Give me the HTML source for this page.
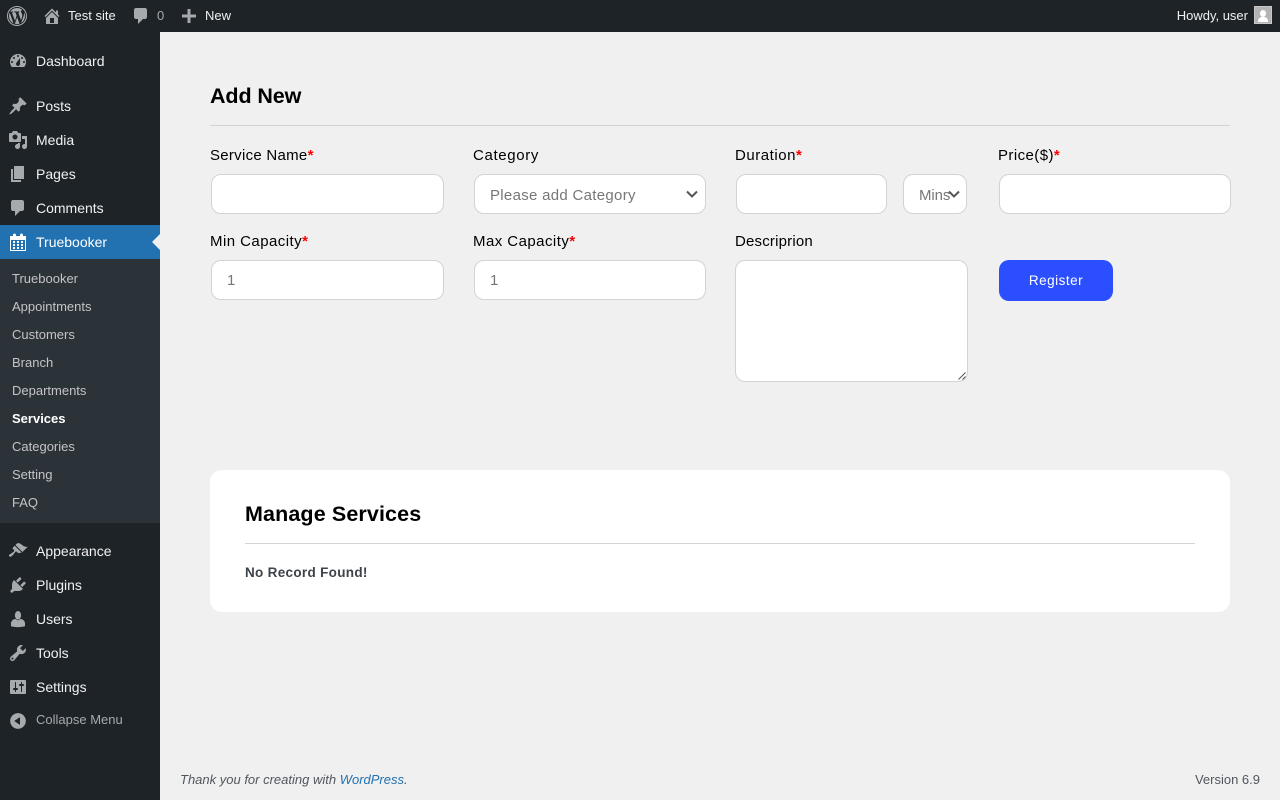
<!DOCTYPE html>
<html lang="en">
<head>
<meta charset="utf-8">
<title>Services</title>
<style>
html,body{margin:0;padding:0;width:1280px;height:800px;overflow:hidden;background:#f0f0f1;font-family:"Liberation Sans",Arial,sans-serif}
*{box-sizing:border-box}
.a{position:absolute;white-space:nowrap}
#bar{position:absolute;left:0;top:0;width:1280px;height:32px;background:#1d2327}
#side{position:absolute;left:0;top:32px;width:160px;height:768px;background:#1d2327}
#sub{position:absolute;left:0;top:259px;width:160px;height:264px;background:#2c3338}
#act{position:absolute;left:0;top:225px;width:160px;height:34px;background:#2271b1}
#arrow{position:absolute;left:152px;top:234px;width:0;height:0;border:8px solid transparent;border-left:0;border-right-color:#f0f0f1}
svg{position:absolute;fill:#a7aaad}
.m{font-size:14px;line-height:18px;color:#f0f0f1;left:36px}
.s{font-size:13px;line-height:18px;color:#c3c4c7;left:12px}
.t{font-size:13px;line-height:18px;color:#f0f0f1}
.l{font-size:15px;line-height:20px;color:#000;letter-spacing:.28px}
.l b{color:#f00;font-weight:700;letter-spacing:0}
.i{position:absolute;background:#fff;border:1px solid #d3d3d3;border-radius:10px}
.p{font-size:15px;line-height:20px;color:#777;letter-spacing:.3px}
</style>
</head>
<body>
<div id="bar"></div>
<div id="side"></div>
<div id="act"></div>
<div id="sub"></div>
<div id="arrow"></div>

<svg style="left:7px;top:6px" width="20" height="20" viewBox="0 0 20 20"><path d="M20 10c0-5.520-4.480-10-10-10S0 4.480 0 10s4.480 10 10 10 10-4.480 10-10zM10 1.010c4.960 0 8.990 4.030 8.990 8.990s-4.030 8.990-8.990 8.990S1.010 14.960 1.010 10 5.040 1.010 10 1.010zM8.010 14.820L4.960 6.610c.49-.03 1.050-.08 1.050-.08.43-.05.38-1.010-.06-.99 0 0-1.290.1-2.130.1-.15 0-.33 0-.52-.01 1.440-2.170 3.900-3.600 6.700-3.600 2.090 0 3.990.79 5.410 2.090-.6-.09-1.450.35-1.450 1.420 0 .66.38 1.220.79 1.880.31.54.5 1.220.5 2.210 0 1.340-1.270 4.480-1.270 4.480l-2.710-7.500c.48-.03.75-.16.75-.16.43-.05.38-1.100-.05-1.080 0 0-1.300.11-2.140.11-.78 0-2.110-.11-2.110-.11-.43-.02-.48 1.060-.05 1.080l.84.08 1.120 3.040zm6.020 2.150L16.640 10s.67-1.690.39-3.810c.63 1.140.94 2.420.94 3.810 0 2.960-1.560 5.580-3.940 6.970zM2.680 6.770L6.500 17.250c-2.670-1.300-4.470-4.080-4.470-7.250 0-1.160.2-2.230.65-3.230zm7.450 4.530l2.290 6.250c.02.05.05.1.08.14-.77.26-1.600.42-2.470.42-.74 0-1.460-.11-2.140-.31z"/></svg>
<svg style="left:42px;top:6px" width="20" height="20" viewBox="0 0 20 20"><path d="M16 8.500l1.530 1.530-1.060 1.060L10 4.620l-6.470 6.470-1.060-1.060L10 2.500l4 4v-2h2v4zm-6-2.460l6 5.990V18H4v-5.970zM12 17v-5H8v5h4z"/></svg>
<div class="a t" style="left:68px;top:7px">Test site</div>
<svg style="left:131px;top:6px" width="20" height="20" viewBox="0 0 20 20"><path d="M5 2h9c1.100 0 2 .9 2 2v7c0 1.100-.9 2-2 2h-2l-5 5v-5H5c-1.100 0-2-.9-2-2V4c0-1.100.9-2 2-2z"/></svg>
<div class="a t" style="left:157px;top:7px;color:#a7aaad">0</div>
<svg style="left:179px;top:6px" width="20" height="20" viewBox="0 0 20 20"><path d="M17 8.500v3h-5.500V17h-3v-5.500H3v-3h5.500V3h3v5.500z"/></svg>
<div class="a t" style="left:205px;top:7px">New</div>
<div class="a t" style="right:32px;top:7px">Howdy, user</div>
<div class="a" style="left:1254px;top:6px;width:18px;height:18px;background:#b4b4b4;border:1px solid #c8c8c8;overflow:hidden">
  <div class="a" style="left:5px;top:3px;width:6px;height:7px;border-radius:50%;background:#fff"></div>
  <div class="a" style="left:3px;top:10px;width:10px;height:5px;border-radius:4px 4px 0 0;background:#fff"></div>
</div>

<svg style="left:8px;top:51px" width="20" height="20" viewBox="0 0 20 20"><path fill-rule="evenodd" d="M3.760 16h12.480c1.100-1.370 1.760-3.110 1.760-5 0-4.420-3.580-8-8-8s-8 3.580-8 8c0 1.890.66 3.630 1.760 5zM10 4c.55 0 1 .45 1 1s-.45 1-1 1-1-.45-1-1 .45-1 1-1zM6 6c.55 0 1 .45 1 1s-.45 1-1 1-1-.45-1-1 .45-1 1-1zm8 0c.55 0 1 .45 1 1s-.45 1-1 1-1-.45-1-1 .45-1 1-1zm-5.370 5.550L12 7v6c0 1.100-.9 2-2 2s-2-.9-2-2c0-.57.24-1.080.63-1.450zM4 10c.55 0 1 .45 1 1s-.45 1-1 1-1-.45-1-1 .45-1 1-1zm12 0c.55 0 1 .45 1 1s-.45 1-1 1-1-.45-1-1 .45-1 1-1z"/></svg>
<div class="a m" style="top:52px">Dashboard</div>
<svg style="left:8px;top:96px" width="20" height="20" viewBox="0 0 20 20"><path d="M10.440 3.020l1.820-1.820 6.360 6.350-1.830 1.820c-1.050-.68-2.480-.57-3.410.36l-.75.75c-.92.93-1.040 2.350-.35 3.410l-1.830 1.820-2.410-2.410-2.800 2.790c-.42.42-3.380 2.710-3.800 2.290s1.860-3.390 2.280-3.810l2.790-2.790L4.100 9.360l1.830-1.820c1.050.69 2.480.57 3.400-.36l.75-.75c.93-.92 1.050-2.350.36-3.410z"/></svg>
<div class="a m" style="top:97px">Posts</div>
<svg style="left:8px;top:130px" width="20" height="20" viewBox="0 0 20 20"><path fill-rule="evenodd" d="M13 11V4c0-.55-.45-1-1-1h-1.670L9 1H5L3.670 3H2c-.55 0-1 .45-1 1v7c0 .55.45 1 1 1h10c.55 0 1-.45 1-1zM7 4.500c1.380 0 2.500 1.120 2.500 2.500S8.380 9.500 7 9.500 4.500 8.380 4.500 7 5.620 4.500 7 4.500zM14 6h5v10.500c0 1.380-1.120 2.500-2.500 2.500S14 17.880 14 16.500s1.120-2.500 2.500-2.500c.17 0 .34.02.5.05V9h-3V6zm-4 8.050V13h2v3.500c0 1.380-1.120 2.500-2.500 2.500S7 17.880 7 16.500 8.120 14 9.500 14c.17 0 .34.02.5.05z"/></svg>
<div class="a m" style="top:131px">Media</div>
<svg style="left:8px;top:164px" width="20" height="20" viewBox="0 0 20 20"><path d="M6 15V2h10v13H6zm-1 1h8v2H3V5h2v11z"/></svg>
<div class="a m" style="top:165px">Pages</div>
<svg style="left:8px;top:198px" width="20" height="20" viewBox="0 0 20 20"><path d="M5 2h9c1.100 0 2 .9 2 2v7c0 1.100-.9 2-2 2h-2l-5 5v-5H5c-1.100 0-2-.9-2-2V4c0-1.100.9-2 2-2z"/></svg>
<div class="a m" style="top:199px">Comments</div>
<svg style="left:8px;top:232px;fill:#fff" width="20" height="20" viewBox="0 0 20 20"><path fill-rule="evenodd" d="M15 4h3v15H2V4h3V3c0-.41.15-.76.44-1.060.29-.29.65-.44 1.060-.44s.77.15 1.060.44c.29.3.44.65.44 1.060v1h4V3c0-.41.15-.76.44-1.060.29-.29.65-.44 1.060-.44s.77.15 1.060.44c.29.3.44.65.44 1.060v1zM17 18V8H3v10h14zM7 9v2H5V9h2zm2 0h2v2H9V9zm4 2V9h2v2h-2zm-6 1v2H5v-2h2zm2 0h2v2H9v-2zm4 2v-2h2v2h-2zm-6 1v2H5v-2h2zm4 2H9v-2h2v2zm4 0h-2v-2h2v2z"/></svg>
<div class="a m" style="top:233px;color:#fff">Truebooker</div>

<div class="a s" style="top:270px">Truebooker</div>
<div class="a s" style="top:298px">Appointments</div>
<div class="a s" style="top:326px">Customers</div>
<div class="a s" style="top:354px">Branch</div>
<div class="a s" style="top:382px">Departments</div>
<div class="a s" style="top:410px;color:#fff;font-weight:700">Services</div>
<div class="a s" style="top:438px">Categories</div>
<div class="a s" style="top:466px">Setting</div>
<div class="a s" style="top:494px">FAQ</div>

<svg style="left:8px;top:541px" width="20" height="20" viewBox="0 0 20 20"><path d="M14.480 11.060L7.410 3.990l1.500-1.500c.5-.56 2.300-.47 3.510.32 1.210.8 1.430 1.280 2.910 2.100 1.180.64 2.450 1.260 4.450.85zm-.71.71L6.700 4.700 4.930 6.470c-.39.39-.39 1.020 0 1.410l1.060 1.060c.39.39.39 1.030 0 1.420-.6.6-1.430 1.110-2.210 1.690-.35.26-.7.53-1.010.84C1.430 13.230.4 14.420 1.400 15.420s2.190-.03 3.500-1.380c.31-.3.57-.66.84-1 .58-.79 1.100-1.620 1.700-2.210.39-.39 1.020-.39 1.410 0l1.060 1.060c.39.4 1.020.4 1.410 0z"/></svg>
<div class="a m" style="top:542px">Appearance</div>
<svg style="left:8px;top:575px" width="20" height="20" viewBox="0 0 20 20"><path d="M13.110 4.360L9.870 7.600 8 5.730l3.240-3.240c.35-.34 1.050-.2 1.560.32.52.51.66 1.210.31 1.550zm-8 1.770l.91-1.120 9.010 9.010-1.190.84c-.71.71-2.630 1.160-3.820 1.160H6.140L4.900 17.260c-.59.59-1.540.59-2.120 0-.59-.58-.59-1.530 0-2.120l1.240-1.240v-3.880c0-1.130.4-3.190 1.090-3.890zm7.260 3.970l3.240-3.240c.34-.35 1.040-.21 1.550.31.52.51.66 1.210.31 1.550l-3.240 3.250z"/></svg>
<div class="a m" style="top:576px">Plugins</div>
<svg style="left:8px;top:609px" width="20" height="20" viewBox="0 0 20 20"><ellipse cx="10" cy="6.300" rx="3.100" ry="4.300"/><path d="M3 17.200v-2.700c0-2.300 1.900-4.500 4.500-4.500L10 11.500 12.500 10c2.600 0 4.500 2.200 4.500 4.500v2.700c-4.500 1.200-9.500 1.200-14 0z"/></svg>
<div class="a m" style="top:610px">Users</div>
<svg style="left:8px;top:643px" width="20" height="20" viewBox="0 0 20 20"><path fill-rule="evenodd" d="M16.680 9.770c-1.340 1.340-3.300 1.670-4.950.99l-5.410 6.520c-.99.99-2.590.99-3.580 0s-.99-2.590 0-3.570l6.520-5.420c-.68-1.650-.35-3.610.99-4.950 1.280-1.280 3.120-1.620 4.720-1.060l-2.890 2.890 2.820 2.820 2.860-2.870c.53 1.580.18 3.390-1.080 4.650zM3.810 16.210c.4.39 1.040.39 1.430 0 .4-.4.4-1.040 0-1.430-.39-.4-1.030-.4-1.430 0-.39.39-.39 1.030 0 1.430z"/></svg>
<div class="a m" style="top:644px">Tools</div>
<svg style="left:8px;top:677px" width="20" height="20" viewBox="0 0 20 20"><path fill-rule="evenodd" d="M18 16V4c0-.55-.45-1-1-1H3c-.55 0-1 .45-1 1v12c0 .55.45 1 1 1h14c.55 0 1-.45 1-1zM8 11h1c.55 0 1 .45 1 1s-.45 1-1 1H8v1.500c0 .28-.22.5-.5.5s-.5-.22-.5-.5V13H6c-.55 0-1-.45-1-1s.45-1 1-1h1V5.500c0-.28.22-.5.5-.5s.5.22.5.5V11zm5-2h-1c-.55 0-1-.45-1-1s.45-1 1-1h1V5.500c0-.28.22-.5.5-.5s.5.22.5.5V7h1c.55 0 1 .45 1 1s-.45 1-1 1h-1v5.500c0 .28-.22.5-.5.5s-.5-.22-.5-.5V9z"/></svg>
<div class="a m" style="top:678px">Settings</div>
<svg style="left:8px;top:711px" width="20" height="20" viewBox="0 0 20 20"><path fill-rule="evenodd" d="M10 2.160c4.330 0 7.840 3.510 7.840 7.840s-3.510 7.840-7.840 7.840S2.160 14.330 2.160 10 5.710 2.160 10 2.160zm2 11.720V6.120L6.180 9.970z"/></svg>
<div class="a" style="left:36px;top:711px;font-size:13px;line-height:18px;color:#a7aaad">Collapse Menu</div>

<div class="a" style="left:210px;top:83px;font-size:21.500px;line-height:26px;font-weight:700;color:#000;letter-spacing:-.1px">Add New</div>
<div class="a" style="left:210px;top:125px;width:1020px;height:1px;background:#d3d3d3"></div>

<div class="a l" style="left:210px;top:146px">Service Name<b>*</b></div>
<div class="a l" style="left:473px;top:146px;letter-spacing:.65px">Category</div>
<div class="a l" style="left:735px;top:146px;letter-spacing:.53px">Duration<b>*</b></div>
<div class="a l" style="left:998px;top:146px;letter-spacing:.42px">Price($)<b>*</b></div>

<div class="i" style="left:211px;top:174px;width:233px;height:40px"></div>
<div class="i" style="left:474px;top:174px;width:232px;height:40px"></div>
<div class="a p" style="left:490px;top:186px">Please add Category</div>
<svg style="left:686px;top:190px;fill:none;stroke:#555;stroke-width:2" width="12" height="8" viewBox="0 0 12 8"><path d="M1 1.500l5 5 5-5"/></svg>
<div class="i" style="left:736px;top:174px;width:151px;height:40px"></div>
<div class="i" style="left:903px;top:174px;width:64px;height:40px"></div>
<div class="a p" style="left:919px;top:186px;letter-spacing:-.1px">Mins</div>
<svg style="left:948px;top:190px;fill:none;stroke:#555;stroke-width:2" width="12" height="8" viewBox="0 0 12 8"><path d="M1 1.500l5 5 5-5"/></svg>
<div class="i" style="left:999px;top:174px;width:232px;height:40px"></div>

<div class="a l" style="left:210px;top:232px;letter-spacing:.45px">Min Capacity<b>*</b></div>
<div class="a l" style="left:473px;top:232px;letter-spacing:.45px">Max Capacity<b>*</b></div>
<div class="a l" style="left:735px;top:232px;letter-spacing:.19px">Descriprion</div>

<div class="i" style="left:211px;top:260px;width:233px;height:40px"></div>
<div class="a p" style="left:227px;top:271px">1</div>
<div class="i" style="left:474px;top:260px;width:232px;height:40px"></div>
<div class="a p" style="left:490px;top:271px">1</div>
<div class="i" style="left:735px;top:260px;width:233px;height:122px"></div>
<svg style="left:957px;top:371px;fill:none;stroke:#555;stroke-width:1" width="10" height="10" viewBox="0 0 10 10"><path d="M1.500 8.500l7-7M5.500 8.500l3-3"/></svg>

<div class="a" style="left:999px;top:260px;width:114px;height:41px;background:#2b4fff;border-radius:10px;color:#fff;font-size:13.500px;line-height:41px;text-align:center;letter-spacing:.5px">Register</div>

<div class="a" style="left:210px;top:470px;width:1020px;height:142px;background:#fff;border-radius:12px"></div>
<div class="a" style="left:245px;top:501px;font-size:21.500px;line-height:26px;font-weight:700;color:#000;letter-spacing:.12px">Manage Services</div>
<div class="a" style="left:245px;top:543px;width:950px;height:1px;background:#d3d3d3"></div>
<div class="a" style="left:245px;top:564px;font-size:13.500px;line-height:18px;font-weight:700;color:#3c434a;letter-spacing:.31px">No Record Found!</div>

<div class="a" style="left:180px;top:771px;font-size:13px;line-height:18px;font-style:italic;color:#50575e">Thank you for creating with <span style="color:#2271b1">WordPress</span>.</div>
<div class="a" style="right:20px;top:771px;font-size:13px;line-height:18px;color:#50575e">Version 6.9</div>
</body>
</html>
